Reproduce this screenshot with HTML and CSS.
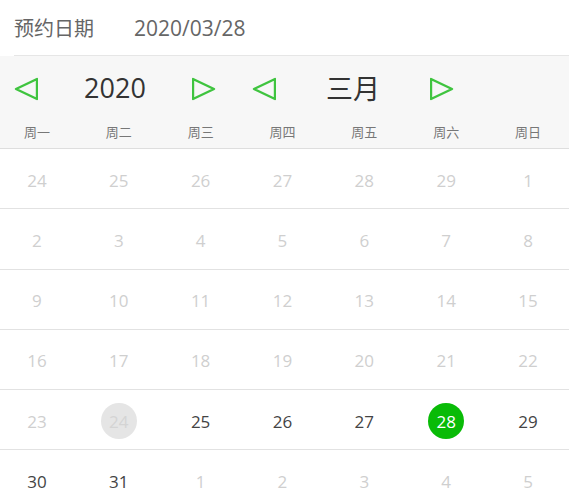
FILE: index.html
```html
<!DOCTYPE html>
<html lang="zh-CN">
  <head>
    <meta charset="UTF-8" />
    <meta name="viewport" content="width=device-width, initial-scale=1.0" />
    <title>预约日期</title>
    <link rel="stylesheet" href="styles.css">
  </head>
  <body>
    <div class="field">
      <span class="field-label">预约日期</span>
      <span class="field-value">2020/03/28</span>
    </div>

    <div class="picker-head">
      <div class="nav">
        <div class="nav-group">
          <svg class="arrow" width="24" height="24" viewBox="0 0 24 24"><polygon points="2,12 23,2 23,22" /></svg>
          <span class="nav-label">2020</span>
          <svg class="arrow" width="24" height="24" viewBox="0 0 24 24"><polygon points="1,2 1,22 22,12" /></svg>
        </div>
        <div class="nav-group">
          <svg class="arrow" width="24" height="24" viewBox="0 0 24 24"><polygon points="2,12 23,2 23,22" /></svg>
          <span class="nav-label">三月</span>
          <svg class="arrow" width="24" height="24" viewBox="0 0 24 24"><polygon points="1,2 1,22 22,12" /></svg>
        </div>
      </div>
      <div class="week">
        <span>周一</span><span>周二</span><span>周三</span><span>周四</span><span>周五</span><span>周六</span><span>周日</span>
      </div>
    </div>

    <div class="days" id="days"></div>

    <script>
      // 2020年3月，周一开头
      const cells = [];
      for (let d = 24; d <= 29; d++) cells.push({ n: d, muted: true });
      cells.push({ n: 1, muted: true });
      for (let d = 2; d <= 31; d++) cells.push({ n: d, muted: d < 24 });
      for (let d = 1; d <= 5; d++) cells.push({ n: d, muted: true });

      const today = 24;
      const picked = 28;
      const box = document.getElementById("days");
      for (let r = 0; r < 6; r++) {
        const row = document.createElement("div");
        row.className = "day-row";
        cells.slice(r * 7, r * 7 + 7).forEach((c, i) => {
          const cell = document.createElement("span");
          cell.className = "day";
          const num = document.createElement("span");
          num.className = "num";
          num.textContent = c.n;
          const inMonth = r > 0 && !(r === 5 && i > 1);
          if (c.muted) num.classList.add("muted");
          if (inMonth && c.n === today) num.classList.add("today");
          if (inMonth && c.n === picked) num.classList.add("picked");
          cell.appendChild(num);
          row.appendChild(cell);
        });
        box.appendChild(row);
      }
    </script>
  </body>
</html>
```

FILE: styles.css
```css
body {
  margin: 0;
  padding: 0;
  background: #fff;
  font-family: "Open Sans", "Noto Sans CJK SC", sans-serif;
  color: #333;
  overflow: hidden;
}

.field {
  height: 55px;
  display: flex;
  align-items: center;
  margin-left: 14px;
  border-bottom: 1px solid #e6e6e6;
  font-size: 20px;
  color: #666;
}

.field-label {
  width: 120px;
  font-family: "Noto Sans CJK SC", sans-serif;
}

.field-value {
  font-size: 21px;
}

.picker-head {
  background: #f7f7f7;
  border-bottom: 1px solid #dedede;
}

.nav {
  height: 66px;
  display: flex;
  align-items: center;
  padding-left: 14px;
}

.nav-group {
  display: flex;
  align-items: center;
  width: 238px;
}

.nav-label {
  width: 154px;
  margin-top: -3px;
  text-align: center;
  font-size: 27px;
  color: #333;
  font-family: "Open Sans", "Noto Sans CJK SC", sans-serif;
}

.arrow polygon {
  fill: none;
  stroke: #3fc43f;
  stroke-width: 2.4;
  stroke-linejoin: round;
}

.week,
.day-row {
  display: grid;
  grid-template-columns: repeat(7, 1fr);
  margin-left: -4px;
}

.week {
  height: 26px;
  line-height: 20px;
  font-size: 13px;
  color: #777;
  text-align: center;
  font-family: "Noto Sans CJK SC", sans-serif;
}

.day-row {
  height: 59.25px;
  border-bottom: 1px solid #e2e2e2;
  align-items: center;
}

.day {
  display: flex;
  justify-content: center;
  padding-top: 3px;
}

.num {
  width: 36px;
  height: 36px;
  border-radius: 50%;
  display: flex;
  align-items: center;
  justify-content: center;
  font-size: 17px;
  color: #444;
}

.num.muted {
  color: #cfcfcf;
}

.num.today {
  background: #e5e5e5;
  color: #d4d4d4;
}

.num.picked {
  background: #09bb07;
  color: #fff;
}
```
